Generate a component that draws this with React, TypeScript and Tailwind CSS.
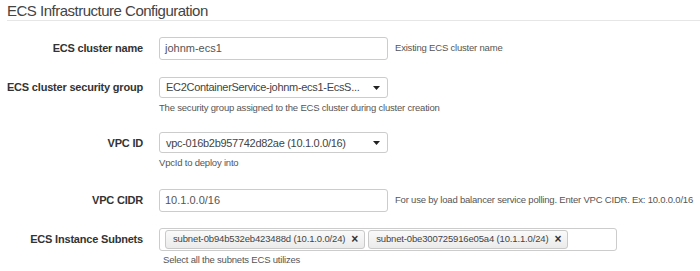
function Caret() {
  return (
    <svg width="7" height="4" viewBox="0 0 7 4" className="shrink-0">
      <path d="M0 0h7L3.5 4z" fill="#222" />
    </svg>
  );
}

function Chip({ text }: { text: string }) {
  return (
    <div className="flex h-[19px] items-center gap-[6px] whitespace-nowrap rounded-[3px] border border-[#c9c9c9] bg-gradient-to-b from-[#fafafa] to-[#ebebeb] pl-[7px] pr-[6px] text-[9.5px] tracking-[-0.15px] text-[#444]">
      <span>{text}</span>
      <span className="text-[12px] font-bold leading-none text-[#333]">×</span>
    </div>
  );
}

function Label({ children }: { children: React.ReactNode }) {
  return (
    <div className="w-[143px] shrink-0 whitespace-nowrap text-right text-[11px] font-bold tracking-[-0.2px] text-[#333]">
      {children}
    </div>
  );
}

export default function App() {
  return (
    <div className="h-[271px] w-[700px] overflow-hidden bg-white font-['Liberation_Sans',Arial,sans-serif] text-[#333]">
      <div className="ml-[7px] h-[21px] whitespace-nowrap border-b border-[#e6e6e6] pt-[1px] text-[15px] leading-[19px] tracking-[-0.5px] text-[#444]">
        ECS Infrastructure Configuration
      </div>

      {/* cluster name */}
      <div className="mt-[16px] flex items-center gap-[16px]">
        <Label>ECS cluster name</Label>
        <div className="flex items-center gap-[7px]">
          <div className="flex h-[23px] w-[229px] items-center rounded-[3px] border border-[#ccc] px-[5px] text-[11px] text-[#555]">
            johnm-ecs1
          </div>
          <span className="whitespace-nowrap text-[9.5px] tracking-[-0.2px] text-[#555]">Existing ECS cluster name</span>
        </div>
      </div>

      {/* security group */}
      <div className="mt-[17px] flex gap-[16px]">
        <div className="flex h-[21px] items-center">
          <Label>ECS cluster security group</Label>
        </div>
        <div>
          <div className="flex h-[21px] w-[229px] items-center justify-between whitespace-nowrap rounded-[3px] border border-[#ccc] pl-[6px] pr-[7px] text-[11px] tracking-[-0.3px] text-[#444]">
            <span>EC2ContainerService-johnm-ecs1-EcsS...</span>
            <Caret />
          </div>
          <div className="mt-[3px] whitespace-nowrap text-[9.5px] tracking-[-0.2px] text-[#555]">
            The security group assigned to the ECS cluster during cluster creation
          </div>
        </div>
      </div>

      {/* vpc id */}
      <div className="mt-[17px] flex gap-[16px]">
        <div className="flex h-[21px] items-center">
          <Label>VPC ID</Label>
        </div>
        <div>
          <div className="flex h-[21px] w-[229px] items-center justify-between whitespace-nowrap rounded-[3px] border border-[#ccc] pl-[6px] pr-[7px] text-[11px] tracking-[-0.3px] text-[#444]">
            <span>vpc-016b2b957742d82ae (10.1.0.0/16)</span>
            <Caret />
          </div>
          <div className="mt-[3px] whitespace-nowrap text-[9.5px] tracking-[-0.2px] text-[#555]">VpcId to deploy into</div>
        </div>
      </div>

      {/* vpc cidr */}
      <div className="mt-[18px] flex items-center gap-[16px]">
        <Label>VPC CIDR</Label>
        <div className="flex items-center gap-[7px]">
          <div className="flex h-[23px] w-[229px] items-center rounded-[3px] border border-[#ccc] px-[5px] text-[11px] text-[#555]">
            10.1.0.0/16
          </div>
          <span className="whitespace-nowrap text-[9.5px] tracking-[-0.2px] text-[#555]">
            For use by load balancer service polling. Enter VPC CIDR. Ex: 10.0.0.0/16
          </span>
        </div>
      </div>

      {/* subnets */}
      <div className="mt-[16px] flex gap-[16px]">
        <div className="flex h-[23px] items-center">
          <Label>ECS Instance Subnets</Label>
        </div>
        <div>
          <div className="flex h-[23px] w-[458px] items-center gap-[3px] rounded-[3px] border border-[#ccc] px-[5px]">
            <Chip text="subnet-0b94b532eb423488d (10.1.0.0/24)" />
            <Chip text="subnet-0be300725916e05a4 (10.1.1.0/24)" />
          </div>
          <div className="ml-[4px] mt-[2px] whitespace-nowrap text-[9.5px] tracking-[-0.2px] text-[#555]">
            Select all the subnets ECS utilizes
          </div>
        </div>
      </div>
    </div>
  );
}
